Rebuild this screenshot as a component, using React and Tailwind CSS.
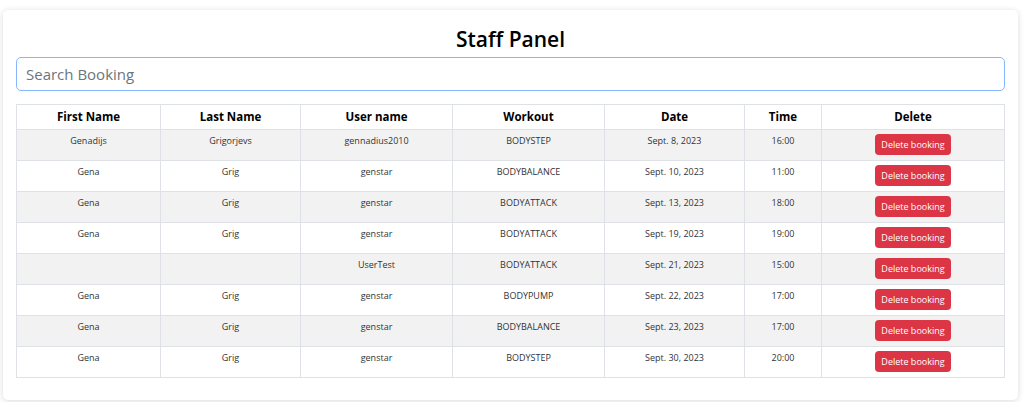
import React from 'react';

const bookings = [
  { first: 'Genadijs', last: 'Grigorjevs', user: 'gennadius2010', workout: 'BODYSTEP', date: 'Sept. 8, 2023', time: '16:00' },
  { first: 'Gena', last: 'Grig', user: 'genstar', workout: 'BODYBALANCE', date: 'Sept. 10, 2023', time: '11:00' },
  { first: 'Gena', last: 'Grig', user: 'genstar', workout: 'BODYATTACK', date: 'Sept. 13, 2023', time: '18:00' },
  { first: 'Gena', last: 'Grig', user: 'genstar', workout: 'BODYATTACK', date: 'Sept. 19, 2023', time: '19:00' },
  { first: '', last: '', user: 'UserTest', workout: 'BODYATTACK', date: 'Sept. 21, 2023', time: '15:00' },
  { first: 'Gena', last: 'Grig', user: 'genstar', workout: 'BODYPUMP', date: 'Sept. 22, 2023', time: '17:00' },
  { first: 'Gena', last: 'Grig', user: 'genstar', workout: 'BODYBALANCE', date: 'Sept. 23, 2023', time: '17:00' },
  { first: 'Gena', last: 'Grig', user: 'genstar', workout: 'BODYSTEP', date: 'Sept. 30, 2023', time: '20:00' },
];

const headers = ['First Name', 'Last Name', 'User name', 'Workout', 'Date', 'Time', 'Delete'];
const widths = ['w-[144px]', 'w-[140px]', 'w-[152px]', 'w-[152px]', 'w-[140px]', 'w-[77px]', 'w-[183px]'];

const App = () => {
  return (
    <div className="min-h-screen bg-white pl-[3px] pr-[6px] pt-[10px] font-['Open_Sans',sans-serif]">
      <div className="bg-white rounded-[5px] shadow-[0_1px_6px_rgba(0,0,0,0.15)] px-[13px] pt-[15px] pb-[22px]">
        <h1 className="text-center text-[21px] leading-[29px] font-semibold text-black mb-[3px]">Staff Panel</h1>
        <input
          type="text"
          placeholder="Search Booking"
          className="w-full h-[34px] border border-[#86b7fe] rounded-[5px] px-[9px] text-[15px] text-[#212529] placeholder:text-[#6c757d] outline-none mb-[13px]"
        />
        <table className="w-full border-collapse table-fixed text-center">
          <thead>
            <tr className="h-[25px]">
              {headers.map((h, i) => (
                <th key={h} className={`${widths[i]} border border-[#dee2e6] text-[11.5px] leading-[16px] font-bold text-black align-middle p-0`}>{h}</th>
              ))}
            </tr>
          </thead>
          <tbody>
            {bookings.map((b, idx) => (
              <tr key={idx} className={`h-[31px] ${idx % 2 === 0 ? 'bg-[#f2f2f2]' : 'bg-white'}`}>
                {[b.first, b.last, b.user, b.workout, b.date, b.time].map((v, i) => (
                  <td key={i} className="border border-[#dee2e6] align-top pt-[4px] px-0 text-[9px] leading-[13px] text-[#333]">{v}</td>
                ))}
                <td className="border border-[#dee2e6] align-top pt-[4px] pb-[4px] px-0 leading-none">
                  <button className="block mx-auto h-[21px] w-[76px] rounded-[4px] bg-[#dc3545] text-white text-[9px] leading-none">Delete booking</button>
                </td>
              </tr>
            ))}
          </tbody>
        </table>
      </div>
    </div>
  );
};

export default App;
